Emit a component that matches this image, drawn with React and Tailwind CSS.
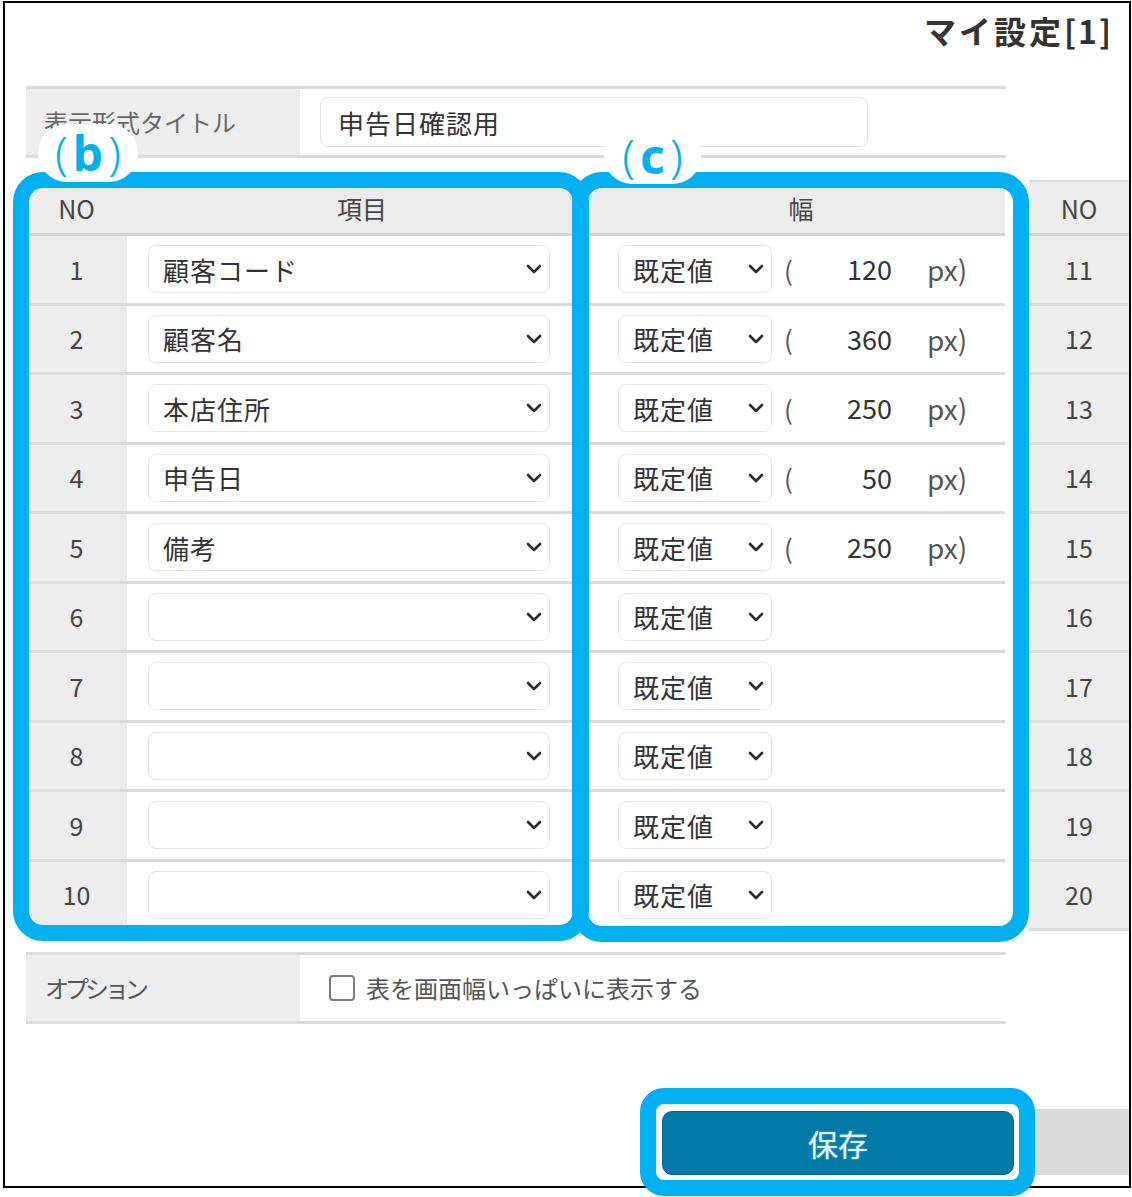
import React from "react";

const F = "font-['Noto_Sans_CJK_JP','Noto_Sans',sans-serif]";

const rows = [
  { no: 1, item: "顧客コード", w: "120" },
  { no: 2, item: "顧客名", w: "360" },
  { no: 3, item: "本店住所", w: "250" },
  { no: 4, item: "申告日", w: "50" },
  { no: 5, item: "備考", w: "250" },
  { no: 6, item: "", w: null },
  { no: 7, item: "", w: null },
  { no: 8, item: "", w: null },
  { no: 9, item: "", w: null },
  { no: 10, item: "", w: null },
];

function Chevron() {
  return (
    <svg width="16" height="10" viewBox="0 0 16 10" className="shrink-0">
      <path d="M2 2 L8 8 L14 2" fill="none" stroke="#2b2b2b" strokeWidth="2.6" strokeLinecap="round" strokeLinejoin="round" />
    </svg>
  );
}

export default function App() {
  return (
    <div className={`relative w-[1132px] h-[1197px] bg-white overflow-hidden ${F}`}>
      {/* frame */}
      <div className="ml-[3px] mt-[1px] w-[1128px] h-[1187px] border-2 border-black overflow-hidden flex flex-col">
        {/* title */}
        <div className="h-[83px] shrink-0 flex justify-end items-start pt-[6px] pr-[18px]">
          <div className="text-[32px] leading-[42px] font-bold text-[#333]">
            <span className="tracking-[3px]">マイ設定</span>
            <span className="tracking-[2px]">[1</span>
            <span>]</span>
          </div>
        </div>

        {/* title form row */}
        <div className="ml-[21px] w-[980px] h-[72px] shrink-0 border-y-[3px] border-[#dadada] flex">
          <div className="w-[274px] bg-[#ededed] flex items-center pl-[18px] text-[24px] text-[#666]">
            表示形式タイトル
          </div>
          <div className="flex items-center pl-[20px]">
            <div className="w-[548px] h-[50px] rounded-[8px] border border-[#e3e3e3] bg-white flex items-center pl-[17px] text-[26px] tracking-[1px] text-[#333]">
              申告日確認用
            </div>
          </div>
        </div>

        {/* tables */}
        <div className="mt-[22px] flex shrink-0">
          <div className="ml-[21px] w-[981px]">
            <div className="h-[56px] bg-[#ececec] border-t-2 border-[#dcdcdc] border-b-[3px] border-b-[#d4d4d4] flex text-[25px] text-[#444]">
              <div className="w-[101px] flex items-center justify-center pt-[2px]">NO</div>
              <div className="w-[470px] flex items-center justify-center pt-[2px]">項目</div>
              <div className="flex-1 flex items-center justify-center pt-[2px]">幅</div>
            </div>
            {rows.map((r) => (
              <div key={r.no} className="h-[69.5px] border-b-[3px] border-[#dadada] flex">
                <div className="w-[101px] bg-[#ededed] flex items-center justify-center text-[25px] text-[#444]">
                  {r.no}
                </div>
                <div className="w-[470px] flex items-center pl-[21px]">
                  <div className="w-[402px] h-[48px] rounded-[8px] border border-[#e6e6e6] bg-white flex items-center justify-between pl-[14px] pr-[7px] text-[26px] tracking-[1px] text-[#333]">
                    <span>{r.item}</span>
                    <Chevron />
                  </div>
                </div>
                <div className="flex-1 flex items-center pl-[21px] text-[26px] text-[#333]">
                  <div className="w-[154px] h-[48px] rounded-[8px] border border-[#e6e6e6] bg-white flex items-center justify-between pl-[14px] pr-[7px] tracking-[1px]">
                    <span>既定値</span>
                    <Chevron />
                  </div>
                  {r.w && (
                    <>
                      <span className="ml-[12px] w-[24px] text-[#555]">(</span>
                      <span className="w-[84px] text-right text-[27px]">{r.w}</span>
                      <span className="ml-[35px] text-[#555] text-[28px]">px)</span>
                    </>
                  )}
                </div>
              </div>
            ))}
          </div>
          <div className="ml-[24px] w-[100px] shrink-0">
            <div className="h-[56px] bg-[#ececec] border-t-2 border-[#dcdcdc] border-b-[3px] border-b-[#d4d4d4] flex items-center justify-center pt-[2px] text-[25px] text-[#444]">
              NO
            </div>
            {rows.map((r) => (
              <div key={r.no} className="h-[69.5px] border-b-[3px] border-[#dadada] bg-[#ededed] flex items-center justify-center text-[25px] text-[#444]">
                {r.no + 10}
              </div>
            ))}
          </div>
        </div>

        {/* options row */}
        <div className="mt-[21px] ml-[21px] w-[980px] h-[72px] shrink-0 border-y-[3px] border-[#dadada] flex">
          <div className="w-[274px] bg-[#ededed] flex items-center pl-[19px] text-[24px] tracking-[-4px] text-[#555]">
            オプション
          </div>
          <div className="flex items-center pl-[29px]">
            <div className="w-[26px] h-[26px] rounded-[4px] border-2 border-[#7a7a7a] bg-white" />
            <span className="ml-[11px] text-[24px] text-[#555]">表を画面幅いっぱいに表示する</span>
          </div>
        </div>

        {/* footer buttons */}
        <div className="mt-[85px] h-[66px] shrink-0 flex justify-end items-end gap-[6px]">
          <button className="w-[352px] h-[64px] rounded-[10px] bg-[#037aa8] border border-[#02658c] text-[30px] text-[#e4f7ff] flex items-center justify-center [text-shadow:0_0_2px_rgba(200,240,255,0.6)]">
            保存
          </button>
          <div className="w-[109px] h-[66px] bg-[#dadada]" />
        </div>
      </div>

      {/* annotations */}
      <div className="absolute left-[13px] top-[172px] w-[576px] h-[769px] border-[16px] border-[#00b0f0] rounded-[30px] pointer-events-none" />
      <div className="absolute left-[572px] top-[172px] w-[457px] h-[770px] border-[16px] border-[#00b0f0] rounded-[30px] pointer-events-none" />
      <div className="absolute left-[38px] top-[124px] w-[100px] h-[58px] rounded-full bg-white flex items-center justify-center text-[#00b0f0] font-['Noto_Sans',sans-serif]">
        <span className="text-[46px] font-light leading-none -mt-[2px]">(</span>
        <span className="text-[48px] font-bold leading-none mx-[5px]">b</span>
        <span className="text-[46px] font-light leading-none -mt-[2px]">)</span>
      </div>
      <div className="absolute left-[604px] top-[128px] w-[97px] h-[56px] rounded-full bg-white flex items-center justify-center text-[#00b0f0] font-['Noto_Sans',sans-serif]">
        <span className="text-[46px] font-light leading-none -mt-[2px]">(</span>
        <span className="text-[48px] font-bold leading-none mx-[5px]">c</span>
        <span className="text-[46px] font-light leading-none -mt-[2px]">)</span>
      </div>
      <div className="absolute left-[640px] top-[1088px] w-[395px] h-[108px] border-[16px] border-[#00b0f0] rounded-[24px] pointer-events-none" />
    </div>
  );
}
